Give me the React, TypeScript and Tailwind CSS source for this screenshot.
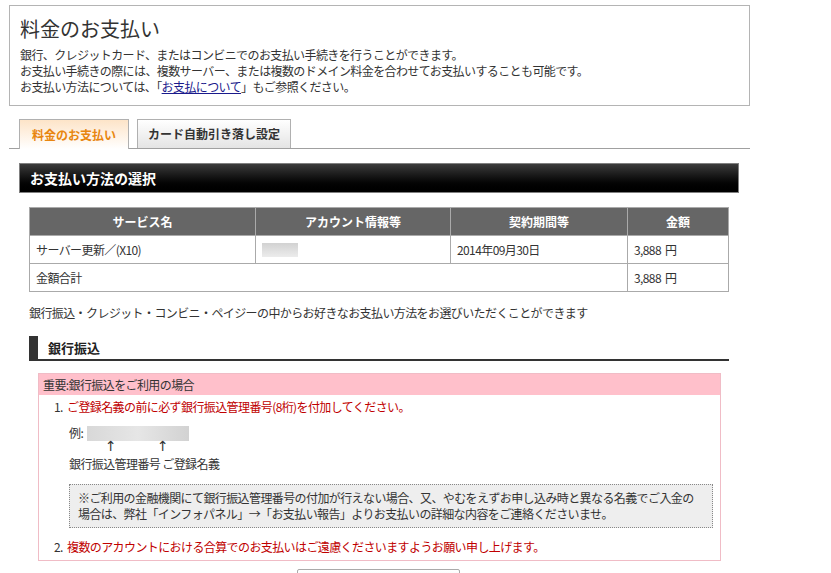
import React from "react";

const font = { fontFamily: '"Noto Sans CJK JP", "Liberation Sans", sans-serif' };
const arrow = { fontFamily: '"DejaVu Sans", sans-serif', fontSize: 14, lineHeight: "14px" };

export default function App() {
  return (
    <div className="w-[831px] h-[573px] overflow-hidden bg-white text-[12px] text-[#333] leading-[16px] tracking-[-0.6px]" style={font}>
      <div className="pt-[5px] pl-[9px] w-[750px]">
        {/* Intro box */}
        <div className="border border-[#b4b4b4] h-[101px] px-[10px] pt-[11px]">
          <h1 className="text-[20px] leading-[24px] text-[#333] mb-[6px] tracking-normal">料金のお支払い</h1>
          <p>銀行、クレジットカード、またはコンビニでのお支払い手続きを行うことができます。</p>
          <p>お支払い手続きの際には、複数サーバー、または複数のドメイン料金を合わせてお支払いすることも可能です。</p>
          <p>
            お支払い方法については、「<span className="text-[#1a1a8c] underline">お支払について</span>」もご参照ください。
          </p>
        </div>

        {/* Tabs */}
        <div className="mt-[12px] flex items-end gap-[8px] pl-[10px] border-b border-[#a0a0a0] h-[31px] tracking-normal">
          <div className="w-[110px] h-[30px] border border-b-0 border-[#b0b0b0] bg-gradient-to-b from-[#fde4c8] to-white flex items-center justify-center font-bold text-[#e8860f] text-[12px] -mb-px">
            料金のお支払い
          </div>
          <div className="w-[154px] h-[29px] border border-b-0 border-[#b0b0b0] bg-gradient-to-b from-white to-[#e4e4e4] flex items-center justify-center font-bold text-[#333] text-[12px]">
            カード自動引き落し設定
          </div>
        </div>

        {/* Section header */}
        <div className="ml-[10px] mt-[14px] w-[720px] h-[30px] border border-[#808080] bg-gradient-to-b from-[#3c3c3c] to-black flex items-center pl-[10px] text-white font-bold text-[14px] tracking-normal">
          お支払い方法の選択
        </div>

        {/* Table */}
        <table className="ml-[20px] mt-[14px] w-[700px] border-collapse border border-[#aaa]">
          <thead>
            <tr className="bg-[#666] text-white font-bold h-[28px] tracking-normal">
              <th className="w-[226px] border border-[#aaa] font-bold">サービス名</th>
              <th className="w-[195px] border border-[#aaa] font-bold">アカウント情報等</th>
              <th className="w-[177px] border border-[#aaa] font-bold">契約期間等</th>
              <th className="border border-[#aaa] font-bold">金額</th>
            </tr>
          </thead>
          <tbody>
            <tr className="h-[28px]">
              <td className="border border-[#aaa] pl-[6px]">サーバー更新／(X10)</td>
              <td className="border border-[#aaa] pl-[6px]">
                <div className="w-[36px] h-[14px] bg-gradient-to-b from-[#d2d2d2] to-[#ececec]" />
              </td>
              <td className="border border-[#aaa] pl-[6px]">2014年09月30日</td>
              <td className="border border-[#aaa] pl-[6px]">3,888<span className="ml-[4px]">円</span></td>
            </tr>
            <tr className="h-[28px]">
              <td colSpan={3} className="border border-[#aaa] pl-[6px]">金額合計</td>
              <td className="border border-[#aaa] pl-[6px]">3,888<span className="ml-[4px]">円</span></td>
            </tr>
          </tbody>
        </table>

        <p className="ml-[20px] mt-[13px]">銀行振込・クレジット・コンビニ・ペイジーの中からお好きなお支払い方法をお選びいただくことができます</p>

        {/* Sub heading */}
        <div className="ml-[20px] mt-[15px] w-[700px] h-[25px] flex border-b-2 border-[#333]">
          <div className="w-[9px] bg-[#333]" />
          <div className="pl-[10px] font-bold text-[13px] flex items-center text-[#222] tracking-normal">銀行振込</div>
        </div>

        {/* Pink box */}
        <div className="ml-[29px] mt-[12px] w-[683px] border border-[#f0bcc6]">
          <div className="bg-[#ffc0cb] h-[21px] pl-[4px] flex items-center">重要:銀行振込をご利用の場合</div>
          <div className="pt-[4px] pb-[5px] pr-[6px]">
            <div className="pl-[15px] flex">
              <span className="w-[13px]">1.</span>
              <span className="text-[#c00000]">ご登録名義の前に必ず銀行振込管理番号(8桁)を付加してください。</span>
            </div>
            <div className="pl-[30px] mt-[10px] flex items-center">
              <span>例:</span>
              <span className="ml-[4px] w-[102px] h-[15px] bg-gradient-to-r from-[#d8d8d8] via-[#e6e6e6] to-[#d2d2d2]" />
            </div>
            <div className="pl-[30px] relative h-[13px]">
              <span className="absolute left-[66px] top-[-2px] text-[#333]" style={arrow}>↑</span>
              <span className="absolute left-[118px] top-[-2px] text-[#333]" style={arrow}>↑</span>
            </div>
            <div className="pl-[30px] mt-[2px]">銀行振込管理番号 ご登録名義</div>
            <div className="ml-[30px] mt-[12px] w-[644px] border border-dotted border-[#888] bg-[#eee] px-[8px] py-[5px] leading-[16px]">
              ※ご利用の金融機関にて銀行振込管理番号の付加が行えない場合、又、やむをえずお申し込み時と異なる名義でご入金の場合は、弊社「インフォパネル」→「お支払い報告」よりお支払いの詳細な内容をご連絡くださいませ。
            </div>
            <div className="pl-[15px] mt-[11px] flex">
              <span className="w-[13px]">2.</span>
              <span className="text-[#c00000]">複数のアカウントにおける合算でのお支払いはご遠慮くださいますようお願い申し上げます。</span>
            </div>
          </div>
        </div>

        <div className="ml-[288px] mt-[8px] w-[163px] h-[20px] border border-[#aaa] rounded-[2px] bg-gradient-to-b from-white to-[#eee]" />
      </div>
    </div>
  );
}
